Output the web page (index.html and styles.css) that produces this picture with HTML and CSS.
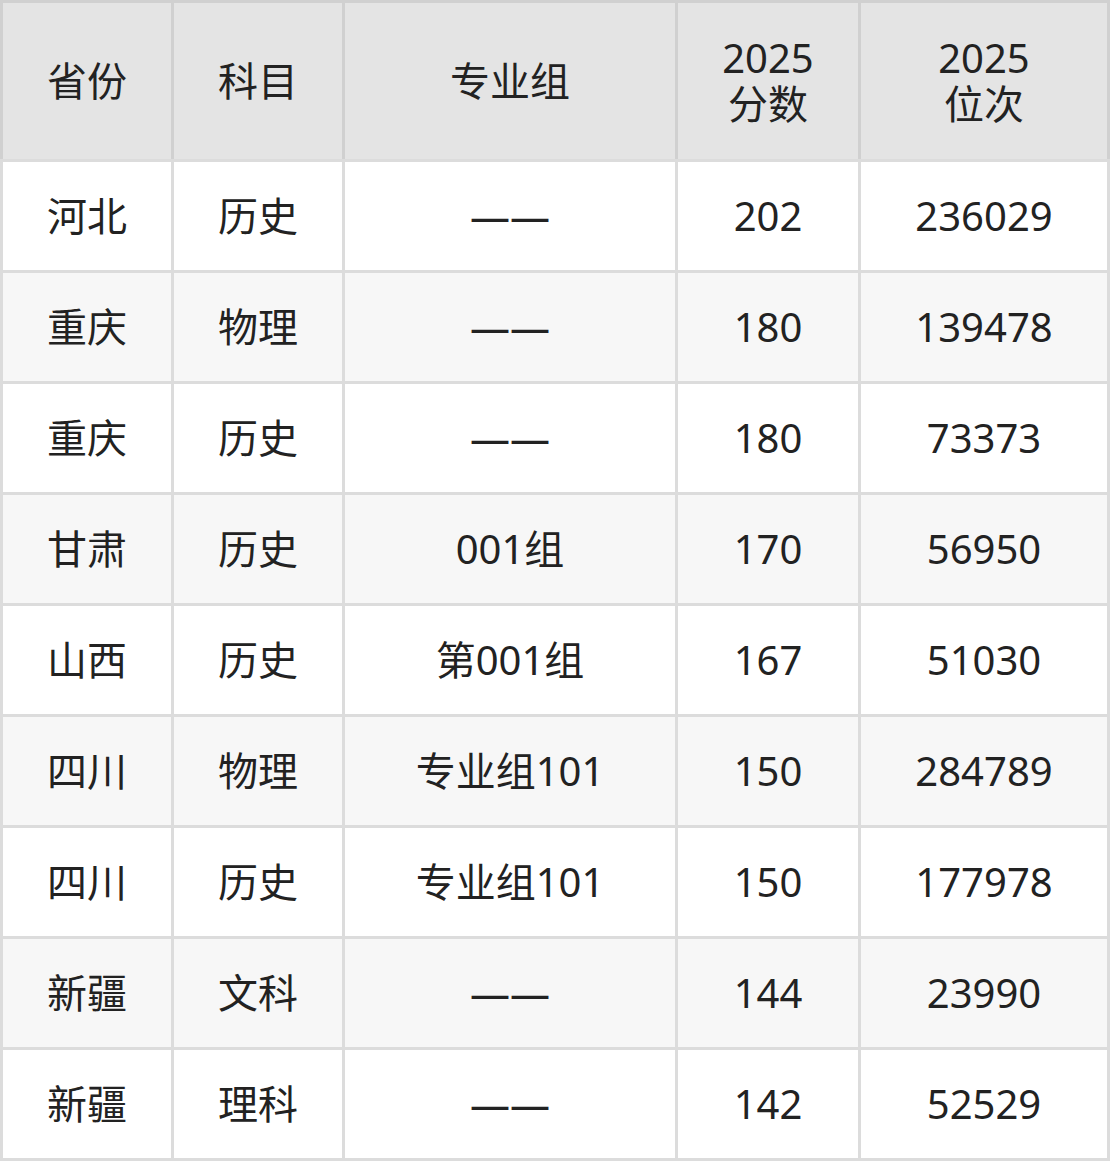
FILE: index.html
```html
<!DOCTYPE html>
<html lang="zh-CN">
<head>
<meta charset="utf-8">
<link rel="stylesheet" href="styles.css">
</head>
<body>
<div class="table">
  <div class="head">
    <div class="cell">省份</div>
    <div class="cell">科目</div>
    <div class="cell">专业组</div>
    <div class="cell">2025<br>分数</div>
    <div class="cell">2025<br>位次</div>
  </div>
  <div class="body">
    <div class="cell">河北</div><div class="cell">历史</div><div class="cell">——</div><div class="cell">202</div><div class="cell">236029</div>
    <div class="cell alt">重庆</div><div class="cell alt">物理</div><div class="cell alt">——</div><div class="cell alt">180</div><div class="cell alt">139478</div>
    <div class="cell">重庆</div><div class="cell">历史</div><div class="cell">——</div><div class="cell">180</div><div class="cell">73373</div>
    <div class="cell alt">甘肃</div><div class="cell alt">历史</div><div class="cell alt">001组</div><div class="cell alt">170</div><div class="cell alt">56950</div>
    <div class="cell">山西</div><div class="cell">历史</div><div class="cell">第001组</div><div class="cell">167</div><div class="cell">51030</div>
    <div class="cell alt">四川</div><div class="cell alt">物理</div><div class="cell alt">专业组101</div><div class="cell alt">150</div><div class="cell alt">284789</div>
    <div class="cell">四川</div><div class="cell">历史</div><div class="cell">专业组101</div><div class="cell">150</div><div class="cell">177978</div>
    <div class="cell alt">新疆</div><div class="cell alt">文科</div><div class="cell alt">——</div><div class="cell alt">144</div><div class="cell alt">23990</div>
    <div class="cell">新疆</div><div class="cell">理科</div><div class="cell">——</div><div class="cell">142</div><div class="cell">52529</div>
  </div>
</div>
</body>
</html>
```
FILE: styles.css
```css
html, body {
  margin: 0;
  padding: 0;
  background: #ffffff;
}
.table {
  width: 1110px;
  display: flex;
  flex-direction: column;
  font-family: "Noto Sans", "Noto Sans CJK SC", sans-serif;
  font-size: 40px;
  color: #222222;
}
.head, .body {
  display: grid;
  grid-template-columns: 168px 168px 330px 180px 246px;
  column-gap: 3px;
}
.head {
  background: #d0d0d0;
  padding: 3px 3px 0 3px;
  grid-template-rows: 156px;
}
.body {
  background: #dcdcdc;
  padding: 3px;
  row-gap: 3px;
  grid-auto-rows: 108px;
}
.cell {
  display: flex;
  align-items: center;
  justify-content: center;
  text-align: center;
  line-height: 46px;
  background: #ffffff;
}
.head .cell {
  background: #e4e4e4;
}
.cell.alt {
  background: #f7f7f7;
}
```
